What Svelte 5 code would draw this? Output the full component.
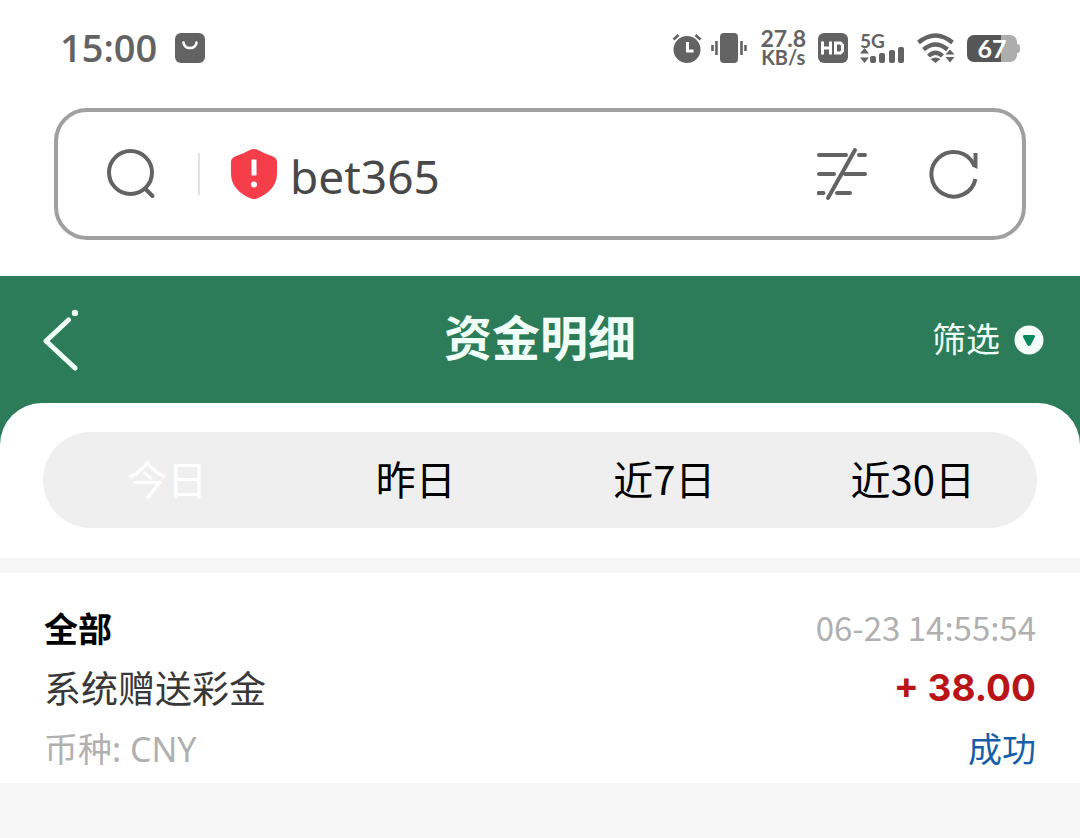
<script>
    let address = "bet365";
    let active = 0;
    const tabs = ["今日", "昨日", "近7日", "近30日"];
    const records = [
        {
            type: "全部",
            time: "06-23 14:55:54",
            name: "系统赠送彩金",
            amount: "+ 38.00",
            currency: "CNY",
            status: "成功",
        },
    ];
</script>

<div class="page">
    <div class="browser">
        <div class="status-bar">
            <div class="status-group">
                <span class="clock">15:00</span>
                <svg width="30" height="30" viewBox="0 0 30 30">
                    <rect width="30" height="30" rx="6" fill="#636363" />
                    <path d="M8.500 9.500a6.500 5.500 0 0 0 13 0" fill="none" stroke="#fff" stroke-width="2.600" stroke-linecap="round" />
                </svg>
            </div>
            <div class="status-group right">
                <svg width="30" height="30" viewBox="0 0 30 30">
                    <circle cx="15" cy="16.500" r="13.500" fill="#636363" />
                    <path d="M1.500 6.500 6.500 2M23.500 2l5 4.500" stroke="#636363" stroke-width="2.600" />
                    <path d="M15.500 9v9h6" fill="none" stroke="#fff" stroke-width="3" />
                </svg>
                <svg class="vibrate" width="36" height="30" viewBox="0 0 36 30">
                    <rect x="9" width="18" height="30" rx="4" fill="#636363" />
                    <path d="M1.500 12v6M5.500 8v14M30.500 8v14M34.500 12v6" stroke="#636363" stroke-width="2.600" />
                </svg>
                <div class="speed">
                    <span>27.8</span>
                    <span class="unit">KB/s</span>
                </div>
                <svg width="30" height="30" viewBox="0 0 30 30">
                    <rect width="30" height="30" rx="6" fill="#636363" />
                    <path d="M4.500 8.500v13M12.500 8.500v13M4.500 15h8M17.500 10h5l2 2v6l-2 2h-5z" fill="none" stroke="#fff" stroke-width="3" />
                </svg>
                <div class="signal">
                    <span class="network">5G</span>
                    <svg width="45" height="30" viewBox="0 0 45 30" fill="#636363">
                        <path d="M0 20.500 4.500 15 9 20.500zM0 24.500h9L4.500 30z" />
                        <rect x="10" y="23" width="6" height="7" rx="2" />
                        <rect x="19" y="20" width="6" height="10" rx="2" />
                        <rect x="29" y="17" width="6" height="13" rx="2" />
                        <rect x="38" y="14" width="6" height="16" rx="2" />
                    </svg>
                </div>
                <svg width="38" height="30" viewBox="0 0 38 30">
                    <g fill="none" stroke="#636363" stroke-width="4.400">
                        <path d="M1.500 9.500q17-14 34 0" />
                        <path d="M6.500 16.500q12-10 24 0" />
                        <path d="M11.500 23q7-6.500 14 0" />
                    </g>
                    <path d="M13.500 26q5-3 10 0L18.500 30z" fill="#636363" />
                    <path d="M27 30V21.500l6-7.500 5 6v10z" fill="#fff" />
                    <path d="M28.500 21.500l4.500-5 4.500 5zM28.500 24h9L33 29.500z" fill="#636363" />
                </svg>
                <div class="battery">
                    <span>67</span>
                </div>
            </div>
        </div>

        <form class="address-bar" on:submit|preventDefault>
            <button class="icon" type="submit" aria-label="搜索">
                <svg width="52" height="52" viewBox="0 0 52 52" fill="none" stroke="#636363" stroke-width="4" stroke-linecap="round">
                    <circle cx="24.500" cy="24.500" r="21.500" />
                    <path d="M39.500 41l7 7" />
                </svg>
            </button>
            <span class="divider"></span>
            <svg width="48" height="50" viewBox="0 0 48 50">
                <path d="M24 0c3 0 6 2 10 4l9 3.500q4 1.500 4 5.500V25c0 12-9 20-20 24.500q-3 1-6 0C10 45 1 37 1 25V13q0-4 4-5.500L14 4C18 2 21 0 24 0z" fill="#f63d4a" />
                <path d="M24 13v11" stroke="#fff" stroke-width="5" stroke-linecap="square" />
                <circle cx="24" cy="35.500" r="3" fill="#fff" />
            </svg>
            <input type="text" aria-label="网址" bind:value={address} />
            <button class="icon" type="button" aria-label="阅读模式">
                <svg width="52" height="54" viewBox="0 0 52 54" fill="none" stroke="#636363" stroke-width="4" stroke-linecap="round">
                    <path d="M2 8h27M42 8h6M2 27h15M28 27h20M1.500 46h5M20 46h13" />
                    <path d="M38 3 11 51" />
                </svg>
            </button>
            <button class="icon reload" type="button" aria-label="刷新">
                <svg width="50" height="52" viewBox="0 0 50 52">
                    <path d="M46.500 31A22.300 22.300 0 1 1 45 17" fill="none" stroke="#636363" stroke-width="4" />
                    <path d="M44.500 5h4v16L43 18.500V13h1.500z" fill="#636363" />
                </svg>
            </button>
        </form>
    </div>

    <main>
        <header>
            <button class="icon" type="button" aria-label="返回">
                <svg width="36" height="62" viewBox="0 0 36 62" fill="none" stroke="#effff7" stroke-width="5" stroke-linecap="round" stroke-linejoin="round">
                    <path d="M26.500 11 4 32l29 27" />
                    <circle cx="33" cy="4" r="3.200" fill="#effff7" stroke="none" />
                </svg>
            </button>
            <h1>资金明细</h1>
            <button class="filter" type="button">
                <span>筛选</span>
                <svg width="30" height="30" viewBox="0 0 30 30">
                    <circle cx="15" cy="15" r="14.500" fill="#f5fffa" />
                    <path d="M10.500 10h9q2.200 0 1.200 2.600l-4 7.400q-1.700 2.200-3.400 0l-4-7.400q-1-2.600 1.200-2.600z" fill="#07865b" />
                </svg>
            </button>
        </header>
        <div class="panel">
            <nav>
                {#each tabs as tab, i}
                    <button type="button" class:active={active === i} on:click={() => (active = i)}>{tab}</button>
                {/each}
            </nav>
        </div>
    </main>

    {#each records as record}
        <section class="record">
            <div class="row">
                <strong>{record.type}</strong>
                <time>{record.time}</time>
            </div>
            <div class="row">
                <span class="name">{record.name}</span>
                <span class="amount">{record.amount}</span>
            </div>
            <div class="row">
                <span class="currency">币种: {record.currency}</span>
                <span class="status">{record.status}</span>
            </div>
        </section>
    {/each}
</div>

<style>
    :global(body) {
        margin: 0;
        background: #f6f6f6;
    }
    .page {
        font-family: "Noto Sans CJK SC", sans-serif;
    }
    svg {
        display: block;
        flex: none;
    }
    button {
        background: none;
        border: 0;
        padding: 0;
        font-family: inherit;
        cursor: pointer;
    }

    .browser {
        padding-bottom: 36px;
        background: #fff;
    }
    .status-bar {
        display: flex;
        justify-content: space-between;
        align-items: center;
        height: 96px;
        padding: 0 63px 0 60px;
        color: #636363;
        font-family: Lato, sans-serif;
        font-weight: bold;
    }
    .status-group {
        display: flex;
        align-items: center;
        gap: 18px;
    }
    .status-group.right {
        gap: 12px;
    }
    .clock {
        font-family: "Open Sans", sans-serif;
        font-size: 38px;
        font-weight: 600;
        line-height: 46px;
        padding-bottom: 2px;
    }
    .vibrate {
        margin: 0 2px 0 -3px;
    }
    .speed {
        display: flex;
        flex-direction: column;
        align-items: center;
        font-size: 23px;
        line-height: 19px;
    }
    .unit {
        font-size: 20px;
    }
    .signal {
        position: relative;
    }
    .network {
        position: absolute;
        top: -2px;
        left: 0;
        font-size: 19px;
        line-height: 19px;
    }
    .battery {
        position: relative;
        width: 50px;
        height: 27px;
        border-radius: 7px;
        background: linear-gradient(to right, #565656 68%, #adadad 68%);
        color: #fff;
        font-size: 25px;
        line-height: 27px;
        text-align: center;
    }
    .battery::after {
        content: "";
        position: absolute;
        top: 9px;
        right: -3px;
        width: 3px;
        height: 9px;
        border-radius: 0 3px 3px 0;
        background: #adadad;
    }

    .address-bar {
        display: flex;
        align-items: center;
        box-sizing: border-box;
        height: 132px;
        padding: 0 43px 0 48px;
        border: 4px solid #a0a0a0;
        border-radius: 33px;
        margin: 12px 54px 0;
    }
    .divider {
        width: 2px;
        height: 42px;
        margin: 0 30px 0 40px;
        background: #e2e2e2;
    }
    .address-bar input {
        flex: 1;
        min-width: 0;
        height: 64px;
        padding: 4px 12px 0;
        border: 0;
        outline: 0;
        background: none;
        color: #484848;
        font-family: "Noto Sans", sans-serif;
        font-size: 46px;
    }
    .reload {
        margin-left: 60px;
    }

    main {
        background: #2c7c59;
    }
    header {
        display: grid;
        grid-template-columns: 1fr auto 1fr;
        align-items: center;
        height: 127px;
        padding: 0 36px 0 42px;
    }
    header .icon {
        justify-self: start;
    }
    h1 {
        margin: 0;
        padding: 0 6px 10px 0;
        color: #effff7;
        font-size: 48px;
        font-weight: bold;
        line-height: 64px;
    }
    .filter {
        display: flex;
        align-items: center;
        justify-self: end;
        gap: 14px;
        color: #effff7;
        font-size: 34px;
        line-height: 48px;
    }
    .filter span {
        padding-bottom: 4px;
    }

    .panel {
        padding: 29px 43px 30px;
        border-radius: 42px 42px 0 0;
        background: #fff;
    }
    nav {
        display: grid;
        grid-template-columns: repeat(4, 1fr);
        border-radius: 48px;
        background: #efefef;
    }
    nav button {
        padding-bottom: 4px;
        color: #000;
        font-size: 40px;
        line-height: 92px;
    }
    nav .active {
        color: #fff;
    }

    .record {
        margin-top: 15px;
        padding: 24px 44px 6px;
        background: #fff;
    }
    .row {
        display: flex;
        justify-content: space-between;
        align-items: center;
        height: 60px;
    }
    .record strong,
    .currency,
    .status {
        font-size: 34px;
    }
    time {
        color: #b0b0b0;
        font-size: 33px;
    }
    .name {
        color: #383838;
        font-size: 37px;
    }
    .amount {
        color: #b91418;
        font-family: Inter, sans-serif;
        font-size: 37px;
        font-weight: bold;
    }
    .currency {
        color: #b0b0b0;
        font-family: "Noto Sans", "Noto Sans CJK SC", sans-serif;
    }
    .status {
        color: #165fa8;
    }
</style>
